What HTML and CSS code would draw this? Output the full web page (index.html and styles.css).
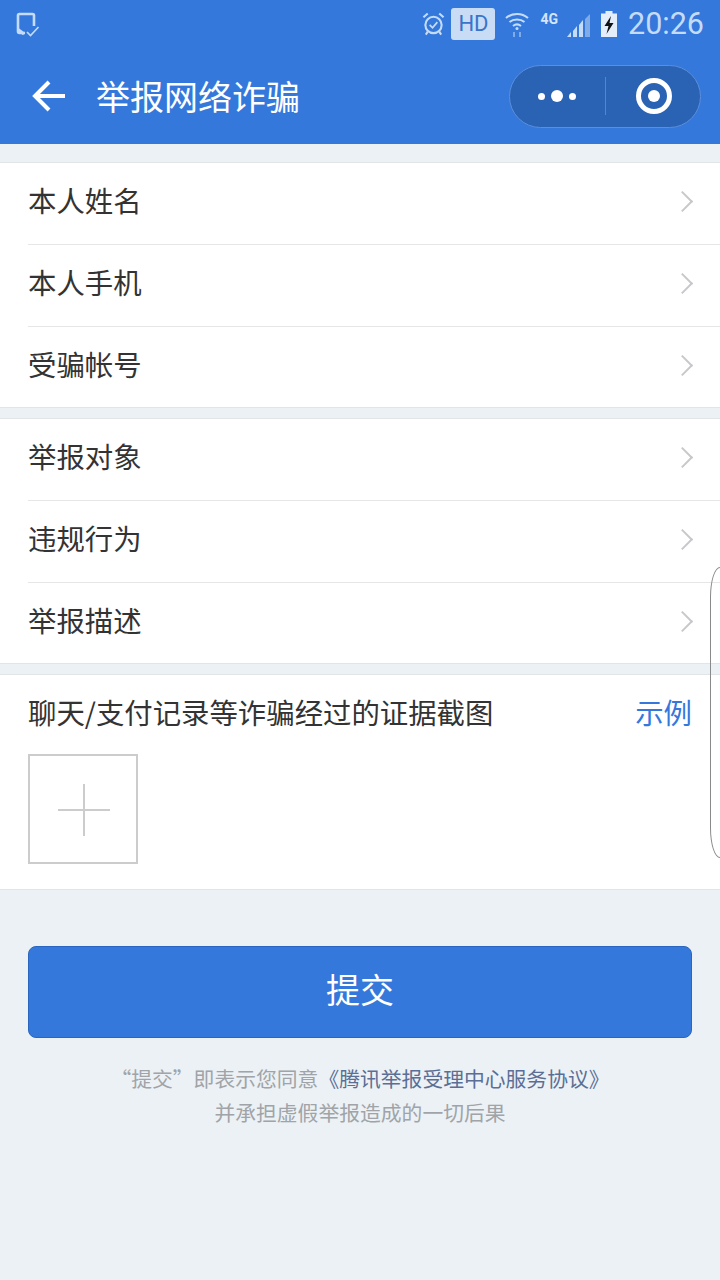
FILE: index.html
```html
<!DOCTYPE html>
<html lang="zh">
<head>
    <meta charset="UTF-8">
    <meta name="viewport" content="width=device-width, initial-scale=1.0">
    <title>举报网络诈骗</title>
    <link rel="stylesheet" href="styles.css">
</head>
<body>
    <div class="top">
        <div class="status-bar">
            <svg class="status-left" width="24" height="26" viewBox="0 0 24 26" fill="none" stroke="#c5dcf8" stroke-width="2.600">
                <path d="M9 21H3.500a1.500 1.500 0 0 1-1.500-1.500V3.500A1.500 1.500 0 0 1 3.500 2h13A1.500 1.500 0 0 1 18 3.500V14"/>
                <path d="M2 17.500L8 22" stroke-width="3"/>
                <path d="M11 20l3.500 3.500L22.500 15" stroke-width="1.600"/>
            </svg>
            <div class="status-right">
                <svg class="alarm" width="23" height="26" viewBox="0 0 24 26" fill="none" stroke="#c5dcf8" stroke-width="2.200">
                    <circle cx="12" cy="14" r="8.500"/>
                    <path d="M8 14l3 3 5-6" stroke-width="1.800"/>
                    <path d="M1.500 6L6 2M22.500 6L18 2M6 21l-2 3M18 21l2 3"/>
                </svg>
                <span class="hd">HD</span>
                <svg class="wifi" width="24" height="26" viewBox="0 0 24 26" fill="none" stroke="#c5dcf8" stroke-width="2">
                    <path d="M1 7c6-5.500 16-5.500 22 0M4.500 11c4-3.500 11-3.500 15 0M8 15c2.500-2 5.500-2 8 0"/>
                    <circle cx="12" cy="17.500" r="1.500" fill="#c5dcf8" stroke="none"/>
                    <path d="M9 26v-5M15 21v5" stroke="#7fabe8"/>
                </svg>
                <span class="net">4G</span>
                <svg class="signal" width="24" height="24" viewBox="0 0 24 24">
                    <path d="M0 24h4v-5z" fill="#c5dcf8"/>
                    <path d="M6 24h4v-11l-4 5z" fill="#c5dcf8"/>
                    <path d="M12 24h4V7l-4 5z" fill="#c5dcf8"/>
                    <path d="M18 24h5V1l-5 5z" fill="#7fabe8"/>
                </svg>
                <svg class="battery" width="18" height="26" viewBox="0 0 18 26">
                    <path d="M5.500 0h7v2.500H17V26H1V2.500h4.500z" fill="#e4eefb"/>
                    <path d="M11 5L4.500 15h4L6.500 23 13.500 12h-4z" fill="#111"/>
                </svg>
                <span class="clock">20:26</span>
            </div>
        </div>
        <div class="nav-bar">
            <svg class="back" width="34" height="32" viewBox="0 0 34 32" fill="none" stroke="#fff" stroke-width="4">
                <path d="M2 16h31M17 2L3 16l14 14"/>
            </svg>
            <div class="nav-title">举报网络诈骗</div>
            <div class="capsule">
                <div class="capsule-btn">
                    <span class="dot"></span>
                    <span class="dot big"></span>
                    <span class="dot"></span>
                </div>
                <div class="capsule-line"></div>
                <div class="capsule-btn">
                    <div class="target"><span></span></div>
                </div>
            </div>
        </div>
    </div>

    <div class="group first">
        <div class="row"><span>本人姓名</span><i class="arrow"></i></div>
        <div class="row"><span>本人手机</span><i class="arrow"></i></div>
        <div class="row"><span>受骗帐号</span><i class="arrow"></i></div>
    </div>

    <div class="group">
        <div class="row"><span>举报对象</span><i class="arrow"></i></div>
        <div class="row"><span>违规行为</span><i class="arrow"></i></div>
        <div class="row"><span>举报描述</span><i class="arrow"></i></div>
    </div>

    <div class="group proof">
        <div class="proof-head">
            <span>聊天/支付记录等诈骗经过的证据截图</span>
            <a class="sample">示例</a>
        </div>
        <div class="add-box"></div>
    </div>

    <button class="submit">提交</button>

    <div class="notice">
        <div>“提交”即表示您同意<a>《腾讯举报受理中心服务协议》</a></div>
        <div>并承担虚假举报造成的一切后果</div>
    </div>

    <!-- 右侧的弧线 -->
    <div class="edge-curve"></div>
</body>
</html>
```

FILE: styles.css
```css
body {
    font-family: "Noto Sans CJK SC", "Noto Sans", sans-serif;
    margin: 0;
    padding: 0;
    height: 1280px;
    overflow: hidden;
    position: relative;
    background-color: #ecf1f5;
    color: #333;
}
.top {
    background-color: #3478dc;
    height: 144px;
}
.status-bar {
    height: 48px;
    display: flex;
    justify-content: space-between;
    align-items: center;
    padding: 0 16px;
}
.status-left {
    margin-top: 2px;
}
.status-right {
    display: flex;
    align-items: center;
}
.alarm {
    margin-right: 6px;
}
.hd {
    width: 44px;
    height: 32px;
    border-radius: 3px;
    background-color: #c9dcf6;
    color: #3a74c8;
    font-family: Roboto, sans-serif;
    font-size: 22px;
    line-height: 32px;
    text-align: center;
    margin-right: 10px;
}
.wifi {
    margin-right: 11px;
}
.net {
    font-family: Roboto, sans-serif;
    font-size: 14px;
    font-weight: 700;
    color: #d5e4f9;
    align-self: flex-start;
    margin: 11px 9px 0 0;
    line-height: 16px;
}
.signal {
    margin: 1px 9px 0 0;
}
.battery {
    margin-right: 10px;
}
.clock {
    font-family: Roboto, sans-serif;
    font-size: 30.500px;
    line-height: 48px;
    color: #c5dcf8;
}
.nav-bar {
    height: 96px;
    display: flex;
    align-items: center;
    padding-left: 32px;
}
.back {
    flex: none;
}
.nav-title {
    flex: 1;
    margin-left: 30px;
    font-size: 34px;
    color: #fff;
    line-height: 96px;
}
.capsule {
    width: 192px;
    height: 63px;
    margin-right: 19px;
    box-sizing: border-box;
    display: flex;
    align-items: center;
    border: 1px solid #5c8fdb;
    border-radius: 32px;
    background-color: #2a62b4;
}
.capsule-btn {
    flex: 1;
    display: flex;
    align-items: center;
    justify-content: center;
    gap: 6px;
}
.capsule-line {
    width: 1px;
    height: 38px;
    background-color: #5685ca;
}
.dot {
    width: 7px;
    height: 7px;
    border-radius: 50%;
    background-color: #fff;
}
.dot.big {
    width: 12px;
    height: 12px;
}
.target {
    width: 36px;
    height: 36px;
    margin-left: 2px;
    box-sizing: border-box;
    border: 5px solid #fff;
    border-radius: 50%;
    display: flex;
    align-items: center;
    justify-content: center;
}
.target span {
    width: 12px;
    height: 12px;
    border-radius: 50%;
    background-color: #fff;
}
.group {
    background-color: #fff;
    border-top: 1px solid #e2e5e8;
    border-bottom: 1px solid #e2e5e8;
    margin-top: 10px;
}
.group.first {
    margin-top: 18px;
}
.row {
    height: 81px;
    margin-left: 28px;
    padding-right: 27px;
    display: flex;
    align-items: center;
    justify-content: space-between;
    font-size: 28.400px;
    border-bottom: 1px solid #e6e6e6;
}
.row span {
    margin-bottom: 8px;
}
.row:last-child {
    height: 80px;
    border-bottom: none;
}
.arrow {
    width: 13px;
    height: 13px;
    border-top: 2px solid #c8c8cc;
    border-right: 2px solid #c8c8cc;
    transform: rotate(45deg);
    margin: 0 3px 4px 0;
}
.proof {
    height: 214px;
    padding: 0 28px;
}
.proof-head {
    display: flex;
    justify-content: space-between;
    align-items: center;
    height: 72px;
    font-size: 28.400px;
}
.sample {
    color: #3478dc;
}
.add-box {
    width: 110px;
    height: 110px;
    box-sizing: border-box;
    border: 2px solid #ccc;
    margin-top: 7px;
    background:
        linear-gradient(#ccc, #ccc) 28px 53px / 52px 2px no-repeat,
        linear-gradient(#ccc, #ccc) 53px 28px / 2px 52px no-repeat;
}
.submit {
    display: block;
    width: 664px;
    height: 92px;
    margin: 56px 28px 0;
    border: 1px solid #2a66bf;
    border-radius: 8px;
    background-color: #3478dc;
    color: #fff;
    font-family: inherit;
    font-size: 34px;
    padding: 0 0 8px;
}
.notice {
    margin-top: 23px;
    text-align: center;
    font-size: 20.800px;
    line-height: 34px;
    color: #a0a4a8;
}
.notice a {
    color: #5b6f96;
}
.edge-curve {
    position: absolute;
    left: 710px;
    top: 567px;
    width: 30px;
    height: 291px;
    box-sizing: border-box;
    border: 1px solid #8a8a8a;
    border-radius: 10px / 30px;
}
```
